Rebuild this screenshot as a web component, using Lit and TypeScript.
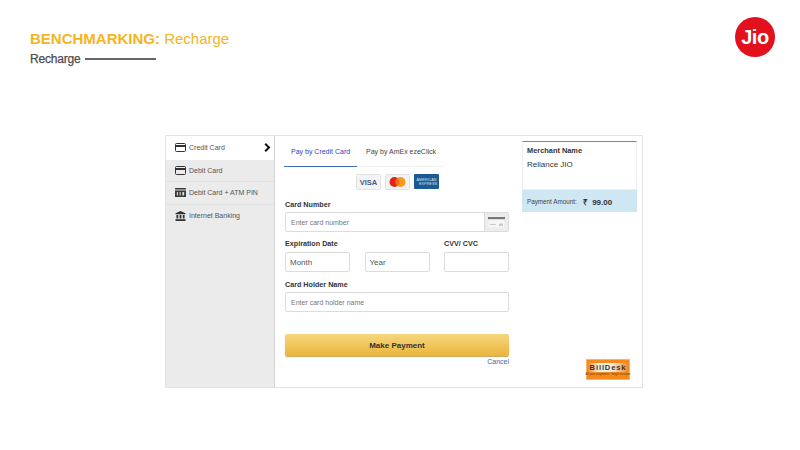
import { LitElement, html, css, svg } from "lit";
import { customElement } from "lit/decorators.js";

const cardIcon = svg`<svg class="ic" viewBox="0 0 11 9" width="11" height="9"><rect x="0.5" y="0.5" width="10" height="8" rx="1" fill="none" stroke="#333" stroke-width="1"/><rect x="0.5" y="2" width="10" height="2" fill="#333"/></svg>`;
const pinIcon = svg`<svg class="ic" viewBox="0 0 12 9" width="11" height="9" preserveAspectRatio="none"><rect x="0" y="0" width="12" height="9" rx="0.5" fill="#3a3a3a"/><rect x="0" y="1.5" width="12" height="1" fill="#ddd"/><rect x="2" y="4" width="1.2" height="3.5" fill="#ddd"/><rect x="5" y="4" width="1.2" height="3.5" fill="#ddd"/><rect x="8" y="4" width="2" height="3.5" fill="#ddd"/></svg>`;
const bankIcon = svg`<svg class="ic" viewBox="0 0 12 11" width="11" height="10"><path d="M6 0 L11.5 2.6 V3.6 H0.5 V2.6 Z" fill="#333"/><rect x="1.5" y="4.4" width="2" height="3.8" fill="#333"/><rect x="5" y="4.4" width="2" height="3.8" fill="#333"/><rect x="8.5" y="4.4" width="2" height="3.8" fill="#333"/><rect x="0.5" y="9" width="11" height="2" fill="#333"/></svg>`;

@customElement("app-root")
export class AppRoot extends LitElement {
  static styles = css`
    :host { display: block; width: 800px; height: 450px; background: #fff; font-family: "Liberation Sans", Arial, sans-serif; overflow: hidden; }
    .page { display: flex; flex-direction: column; height: 450px; box-sizing: border-box; padding: 17px 25px 63px 30px; }
    .top { display: flex; justify-content: space-between; align-items: flex-start; height: 118px; flex: none; }
    .title { margin: 13px 0 0; font-size: 15px; line-height: 17px; color: #f5b422; font-weight: 400; }
    .title b { font-weight: 700; }
    .sub { display: flex; align-items: center; gap: 5px; margin-top: 5px; font-size: 12px; line-height: 14px; color: #4c4c50; -webkit-text-stroke: 0.25px #4c4c50; letter-spacing: -0.2px; }
    .sub i { display: block; width: 71px; height: 1.5px; background: #66666a; }
    .logo { width: 40px; height: 40px; border-radius: 50%; background: #e3101e; color: #fff; font-size: 20px; font-weight: 700; display: flex; align-items: center; justify-content: center; letter-spacing: -0.4px; }
    .card { width: 478px; height: 253px; flex: none; margin-left: 135px; box-sizing: border-box; border: 1px solid #e3e3e3; display: flex; color: #333; }
    .side { width: 109px; flex: none; background: #ebebeb; border-right: 1px solid #d4d4d4; box-sizing: border-box; }
    .item { display: flex; align-items: center; height: 22.5px; padding-left: 9px; gap: 3px; font-size: 7px; color: #555; border-bottom: 1px solid #e2e2e2; box-sizing: border-box; }
    .item.on { background: #fff; width: 108px; height: 23.5px; padding-right: 3px; border-bottom: 0; }
    .item .ic { flex: none; }
    .item .chev { margin-left: auto; flex: none; }
    .item:last-child { border-bottom: 0; }
    .main { width: 244px; flex: none; padding: 0 10px; box-sizing: border-box; display: flex; flex-direction: column; }
    .tabs { display: flex; height: 31px; border-bottom: 1px solid #f0f0f0; width: 160px; margin-left: -1px; box-sizing: border-box; font-size: 7px; flex: none; }
    .tab { display: flex; align-items: center; color: #444; height: 31px; box-sizing: border-box; white-space: nowrap; }
    .tab.on { color: #2f3fc4; border-bottom: 1px solid #3d6fb4; width: 73px; padding: 0 7px; }
    .tab.alt { margin-left: 9px; }
    .brands { display: flex; justify-content: center; align-items: center; gap: 4px; height: 21px; margin-top: 4px; flex: none; }
    .label { font-size: 7.2px; font-weight: 700; color: #333; line-height: 9px; }
    .l1 { margin-top: 8px; }
    .input { box-sizing: border-box; height: 20px; border: 1px solid #dcdcdc; border-radius: 2px; background: #fff; display: flex; align-items: center; padding-left: 5px; font-size: 7px; color: #777; }
    .num { margin-top: 3px; padding: 0; justify-content: space-between; }
    .num span { padding-left: 5px; }
    .num .cc { width: 23px; height: 18px; background: #ececec; border-left: 1px solid #dcdcdc; display: flex; align-items: center; justify-content: center; }
    .row { display: grid; grid-template-columns: 65px 65px 65px; column-gap: 14.5px; margin-top: 7px; }
    .row .label { margin-bottom: 4px; }
    .row .input { font-size: 8px; color: #555; padding-left: 4px; }
    .exp { grid-column: span 2; }
    .l2 { margin-top: 8px; }
    .name { margin-top: 3px; }
    .pay { margin-top: 22px; height: 22px; flex: none; border-radius: 2px; background: linear-gradient(#f6d77e, #eab53c); box-shadow: 0 1px 1px #c9a552; display: flex; align-items: center; justify-content: center; font-size: 8px; font-weight: 700; color: #333; }
    .cancel { text-align: right; font-size: 7px; color: #3c6aa8; margin-top: 2px; line-height: 8px; }
    .right { width: 115px; flex: none; margin-left: 3px; display: flex; flex-direction: column; height: 246px; margin-top: 5px; }
    .mer { height: 49px; box-sizing: border-box; border: 1px solid #eeeeee; border-top: 1px solid #5b8fc4; padding: 4px 4px; flex: none; }
    .mer .h { font-size: 7.4px; font-weight: 700; color: #333; line-height: 9px; }
    .mer .v { font-size: 8px; color: #333; margin-top: 5px; line-height: 10px; }
    .amt { height: 22px; flex: none; background: #cfe6f3; display: flex; align-items: center; padding-left: 5px; font-size: 6.3px; color: #444; }
    .amt b { font-size: 8px; color: #333; margin-left: 6px; white-space: pre; }
    .bd { align-self: flex-end; margin: 147px 7px 0 0; width: 44px; height: 21px; box-sizing: border-box; background: #f58a1f; display: flex; flex-direction: column; align-items: center; justify-content: center; border: 1px solid #f9b366; }
    .bd .t { font-size: 7.5px; font-weight: 700; letter-spacing: 0.9px; color: #333; background: linear-gradient(90deg, #f58a1f, #f4ece0 25%, #f4ece0 60%, #f58a1f); line-height: 9px; padding: 0 2px; }
    .bd .s { font-size: 3px; line-height: 4px; color: #6a3a00; white-space: nowrap; }
  `;

  render() {
    return html`<div class="page">
      <div class="top">
        <div>
          <h1 class="title"><b>BENCHMARKING:</b> Recharge</h1>
          <div class="sub">Recharge <i></i></div>
        </div>
        <div class="logo">Jio</div>
      </div>
      <div class="card">
        <div class="side">
          <div class="item on">${cardIcon}Credit Card
            <svg class="chev" width="7" height="9" viewBox="0 0 7 9"><path d="M1.2 0.8 L5 4.5 L1.2 8.2" fill="none" stroke="#111" stroke-width="2"/></svg>
          </div>
          <div class="item">${cardIcon}Debit Card</div>
          <div class="item">${pinIcon}Debit Card + ATM PIN</div>
          <div class="item">${bankIcon}Internet Banking</div>
        </div>
        <div class="main">
          <div class="tabs">
            <div class="tab on">Pay by Credit Card</div>
            <div class="tab alt">Pay by AmEx ezeClick</div>
          </div>
          <div class="brands">
            <svg width="25" height="16" viewBox="0 0 25 16"><rect x="0.5" y="0.5" width="24" height="15" rx="1" fill="#f4f4f4" stroke="#e2e2e2"/><text x="12.5" y="11" text-anchor="middle" font-family="Liberation Sans" font-size="7.5" font-weight="700" fill="#4a5a80">VISA</text></svg>
            <svg width="25" height="16" viewBox="0 0 25 16"><rect x="0.5" y="0.5" width="24" height="15" rx="1" fill="#f4f4f4" stroke="#e2e2e2"/><circle cx="9.5" cy="8" r="5" fill="#e2231a"/><circle cx="15.5" cy="8" r="5" fill="#f49b1c"/><path d="M12.5 4 a5 5 0 0 1 0 8 a5 5 0 0 1 0 -8" fill="#ee6a1f"/></svg>
            <svg width="25" height="15" viewBox="0 0 25 15"><rect width="25" height="15" rx="1" fill="#1c5a92"/><text x="12.5" y="6.5" text-anchor="middle" font-family="Liberation Sans" font-size="3.8" fill="#cfe2f2">AMERICAN</text><text x="14" y="11" text-anchor="middle" font-family="Liberation Sans" font-size="3.8" fill="#cfe2f2">EXPRESS</text></svg>
          </div>
          <div class="label l1">Card Number</div>
          <div class="input num"><span>Enter card number</span>
            <div class="cc"><svg width="17" height="12" viewBox="0 0 17 12"><rect x="0" y="0" width="17" height="12" fill="#f5f5f5" stroke="#ddd" stroke-width="0.5"/><rect x="0" y="1" width="17" height="2.2" fill="#777"/><rect x="11" y="7.5" width="4" height="2.5" fill="#ccc"/><rect x="2" y="8" width="6" height="1" fill="#ccc"/></svg></div>
          </div>
          <div class="row">
            <div class="label exp">Expiration Date</div>
            <div class="label">CVV/ CVC</div>
            <div class="input">Month</div>
            <div class="input">Year</div>
            <div class="input"></div>
          </div>
          <div class="label l2">Card Holder Name</div>
          <div class="input name">Enter card holder name</div>
          <div class="pay">Make Payment</div>
          <div class="cancel">Cancel</div>
        </div>
        <div class="right">
          <div class="mer">
            <div class="h">Merchant Name</div>
            <div class="v">Reliance JIO</div>
          </div>
          <div class="amt">Payment Amount: <b>₹  99.00</b></div>
          <div class="bd"><div class="t">BillDesk</div><div class="s">All your payments. Single location</div></div>
        </div>
      </div>
    </div>`;
  }
}
